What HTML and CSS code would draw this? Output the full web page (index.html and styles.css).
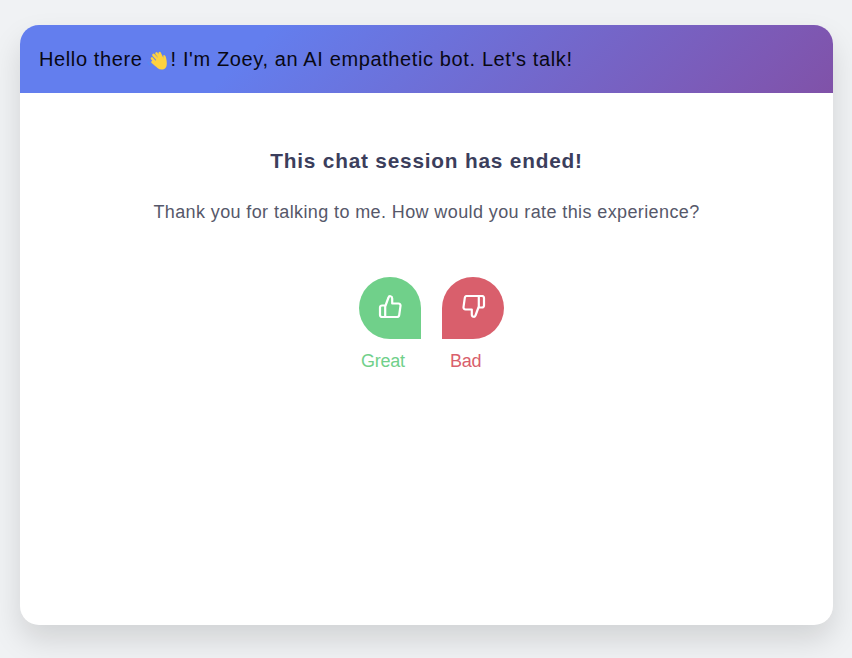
FILE: index.html
```html
<!DOCTYPE html>
<html lang="en">
<head>
<meta charset="utf-8">
<title>Zoey</title>
<link rel="stylesheet" href="styles.css">
</head>
<body>
<main class="chat">
  <header class="chat-header">
    <span>Hello there</span>
    <svg class="wave" viewBox="0 0 24 22" aria-label="waving hand"><g fill="none" stroke="#4f8bf5" stroke-width="1" stroke-linecap="round"><path d="M13 1.500c2 0 3.500 1.500 3.500 3.500M1 13c0 2 1.500 3.500 3.500 3.500"/></g><g fill="none" stroke="#ffd23f" stroke-width="2.600" stroke-linecap="round"><path d="M12 12 6.500 6M13 9 9.500 4.500M15 9 12.700 4.200M9 14 5 9.500M9 16 5.500 13"/></g><path fill="#ffd23f" d="M7 14 11 8l5 2 .5-4c2-.5 2.500 2 3 5 .8 5 .3 9-4 9.500-3.500.5-6-2-9-6z"/></svg>
    <span>! I'm Zoey, an AI empathetic bot. Let's talk!</span>
  </header>
  <section class="ended">
    <h1 class="title">This chat session has ended!</h1>
    <p class="question">Thank you for talking to me. How would you rate this experience?</p>
    <div class="ratings">
      <div class="rating great">
        <button class="bubble" aria-label="Great"><svg class="thumb" viewBox="0 0 24 24"><path d="M7.200 12.500 10.500 3.500C11 1.500 14.200 1.800 14.200 4.500V9.500H20.500a2 2 0 0 1 2 2.300l-1.300 9.400a2 2 0 0 1-2 1.800H4a2 2 0 0 1-2-2v-7.500a2 2 0 0 1 2-2h3.200V23"/></svg></button>
        <span class="label">Great</span>
      </div>
      <div class="rating bad">
        <button class="bubble" aria-label="Bad"><svg class="thumb flipped" viewBox="0 0 24 24"><path d="M7.200 12.500 10.500 3.500C11 1.500 14.200 1.800 14.200 4.500V9.500H20.500a2 2 0 0 1 2 2.300l-1.300 9.400a2 2 0 0 1-2 1.800H4a2 2 0 0 1-2-2v-7.500a2 2 0 0 1 2-2h3.200V23"/></svg></button>
        <span class="label">Bad</span>
      </div>
    </div>
  </section>
</main>
</body>
</html>
```
FILE: styles.css
```css
* { box-sizing: border-box; }
body { margin: 0; height: 658px; overflow: hidden; padding: 25px 19px 33px 20px; background: #f0f2f4; font-family: "Liberation Sans", Arial, sans-serif; }
.chat { height: 600px; border-radius: 19px; overflow: hidden; background: #fff; box-shadow: 0 15px 30px rgba(0,0,0,.13); }
.chat-header { height: 68px; padding: 0 19px; display: flex; align-items: center; background: linear-gradient(135deg, #637eee 0%, #637eee 29%, #7d59b5 88%, #8052a8 100%); color: #080814; font-size: 20px; letter-spacing: .62px; white-space: nowrap; }
.wave { width: 24px; height: 22px; margin: 2px 0 0 4px; }
.ended { display: flex; flex-direction: column; align-items: center; padding-top: 56px; }
.title { margin: 0; font-size: 20.8px; line-height: 24px; letter-spacing: .8px; color: #3b3e5c; }
.question { margin: 28px 0 0; font-size: 18px; line-height: 22px; letter-spacing: .39px; color: #56586a; }
.ratings { display: flex; gap: 21px; margin: 54px 0 0 10px; }
.rating { width: 62px; }
.bubble { display: flex; justify-content: center; width: 62px; height: 62px; padding: 17px 0 0; border: 0; }
.thumb { width: 24px; height: 24px; fill: none; stroke: #fff; stroke-width: 2.2; stroke-linecap: round; stroke-linejoin: round; }
.flipped { transform: translate(1px, 1px) rotate(180deg); }
.label { display: block; margin: 11px 0 0 2px; font-size: 18px; line-height: 22px; letter-spacing: -.25px; }
.great { color: #70d08a; }
.great .bubble { background: #70d08a; border-radius: 50% 50% 0 50%; }
.bad { color: #d95f6c; }
.bad .bubble { background: #d95f6c; border-radius: 50% 50% 50% 0; }
.bad .label { margin-left: 8px; }
```
